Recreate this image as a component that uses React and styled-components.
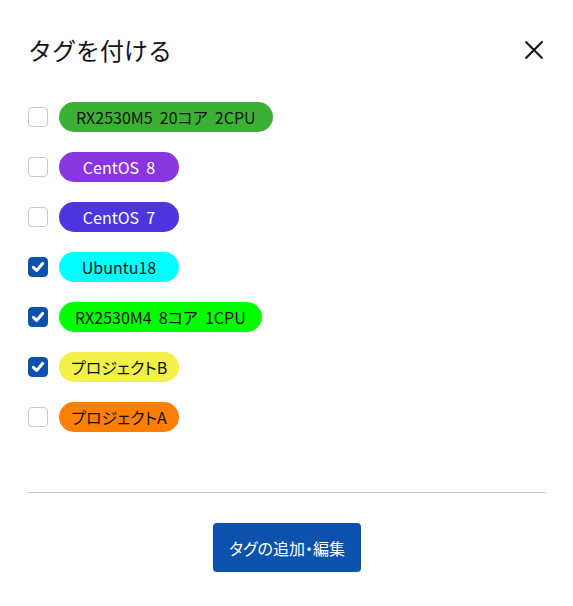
import React, { useState } from "react";
import styled, { createGlobalStyle } from "styled-components";

const Global = createGlobalStyle`
  html, body { margin: 0; padding: 0; background: #fff; }
  body { font-family: "Noto Sans CJK JP", "Noto Sans", sans-serif; color: #111; }
  * { box-sizing: border-box; }
`;

const Dialog = styled.div`
  width: 573px;
  padding: 32px 27px 0 28px;
  display: flex;
  flex-direction: column;
`;

const Header = styled.div`
  display: flex;
  align-items: center;
  justify-content: space-between;
  height: 36px;
`;

const Title = styled.h2`
  margin: 0;
  font-size: 24px;
  font-weight: 400;
  line-height: 36px;
  color: #111;
`;

const CloseButton = styled.button`
  border: 0;
  background: none;
  padding: 0;
  width: 22px;
  height: 22px;
  margin-right: 1px;
  display: flex;
  align-items: center;
  justify-content: center;
  cursor: pointer;
`;

const List = styled.ul`
  list-style: none;
  margin: 34px 0 0;
  padding: 0;
  display: flex;
  flex-direction: column;
  gap: 20px;
`;

const Row = styled.li`
  display: flex;
  align-items: center;
  gap: 11px;
  height: 30px;
`;

const Box = styled.span`
  width: 20px;
  height: 20px;
  border-radius: 4px;
  border: 1px solid ${(p) => (p.$checked ? "#0b52ad" : "#c8c8c8")};
  background: ${(p) => (p.$checked ? "#0b52ad" : "#fff")};
  display: flex;
  align-items: center;
  justify-content: center;
  cursor: pointer;
`;

const Pill = styled.span`
  display: inline-flex;
  align-items: center;
  justify-content: center;
  min-width: 120px;
  height: 30px;
  padding: 0 ${(p) => p.$pad}px;
  border-radius: 15px;
  background: ${(p) => p.$bg};
  color: ${(p) => p.$fg};
  font-size: 16px;
  font-feature-settings: "palt";
  white-space: pre;
`;

const Divider = styled.hr`
  margin: 60px 0 0;
  border: 0;
  border-top: 1px solid #c8c8c8;
`;

const Footer = styled.div`
  display: flex;
  justify-content: center;
  padding-top: 30px;
`;

const PrimaryButton = styled.button`
  height: 49px;
  padding: 0 16px;
  border: 0;
  border-radius: 4px;
  background: #0b52ad;
  color: #fff;
  font-family: inherit;
  font-size: 16px;
  font-feature-settings: "palt";
  cursor: pointer;
`;

const tags = [
  { label: "RX2530M5  20コア  2CPU", bg: "#3bb134", fg: "#111", checked: false, pad: 17 },
  { label: "CentOS  8", bg: "#8a36e0", fg: "#fff", checked: false, pad: 16 },
  { label: "CentOS  7", bg: "#4b36df", fg: "#fff", checked: false, pad: 16 },
  { label: "Ubuntu18", bg: "#00ffff", fg: "#111", checked: true, pad: 16 },
  { label: "RX2530M4  8コア  1CPU", bg: "#00ff00", fg: "#111", checked: true, pad: 16 },
  { label: "プロジェクトB", bg: "#f3ef4b", fg: "#111", checked: true, pad: 12 },
  { label: "プロジェクトA", bg: "#ff7f00", fg: "#111", checked: false, pad: 12 },
];

const Check = () => (
  <svg width="14" height="14" viewBox="0 0 14 14">
    <path d="M2.4 7.4 L5.6 10.4 L11.6 3.4" fill="none" stroke="#fff" strokeWidth="3" strokeLinecap="round" strokeLinejoin="round" />
  </svg>
);

export default function App() {
  const [state, setState] = useState(tags.map((t) => t.checked));
  return (
    <>
      <Global />
      <Dialog>
        <Header>
          <Title>タグを付ける</Title>
          <CloseButton aria-label="close">
            <svg width="20" height="20" viewBox="0 0 20 20">
              <path d="M1.5 1.5 L18.5 18.5 M18.5 1.5 L1.5 18.5" stroke="#111" strokeWidth="2" />
            </svg>
          </CloseButton>
        </Header>
        <List>
          {tags.map((t, i) => (
            <Row key={t.label}>
              <Box
                $checked={state[i]}
                onClick={() => setState((s) => s.map((v, j) => (j === i ? !v : v)))}
              >
                {state[i] && <Check />}
              </Box>
              <Pill $bg={t.bg} $fg={t.fg} $pad={t.pad}>{t.label}</Pill>
            </Row>
          ))}
        </List>
        <Divider />
        <Footer>
          <PrimaryButton>タグの追加・編集</PrimaryButton>
        </Footer>
      </Dialog>
    </>
  );
}
